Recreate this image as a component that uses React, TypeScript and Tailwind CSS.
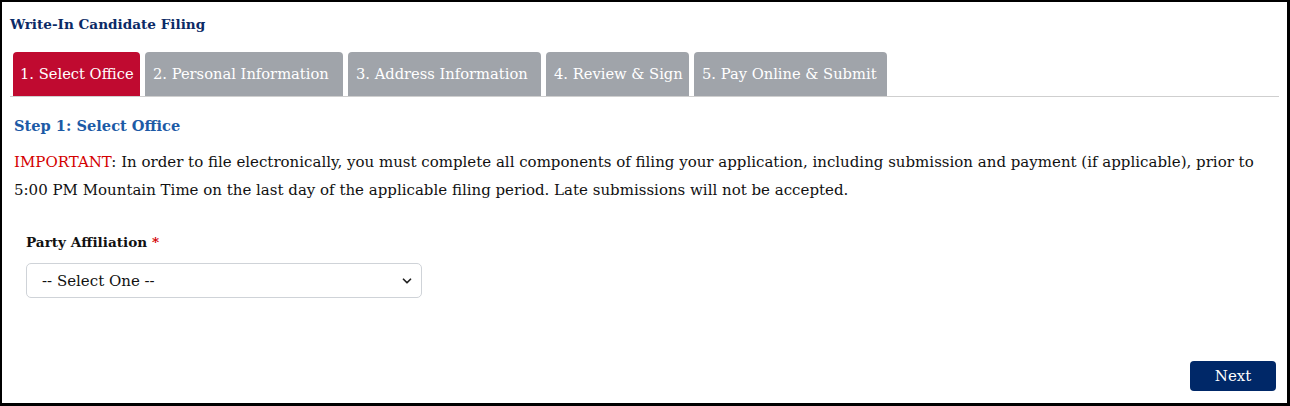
import { ChevronDown } from "lucide-react";

const tabs = [
  { label: "1. Select Office", w: "w-[127px]" },
  { label: "2. Personal Information", w: "w-[198px]" },
  { label: "3. Address Information", w: "w-[193px]" },
  { label: "4. Review & Sign", w: "w-[143px]" },
  { label: "5. Pay Online & Submit", w: "w-[193px]" },
];

const App = () => {
  return (
    <div className="h-[406px] w-[1290px] border-l-2 border-t-2 border-r-[3px] border-b-[3px] border-black bg-white font-['DejaVu_Serif',serif] text-[#111]">
      <div className="flex h-full flex-col pl-[8px] pr-[8px]">
        <h1 className="pt-[12px] text-[13.6px] font-bold text-[#0b2a66]">Write-In Candidate Filing</h1>

        <div className="mt-[18px] flex gap-[5px] border-b border-[#cfcfcf] pl-[3px]">
          {tabs.map((t, i) => (
            <div
              key={t.label}
              className={
                i === 0
                  ? `flex h-[44px] ${t.w} items-center rounded-t-[4px] bg-[#c00a30] pl-[7px] text-[14.7px] text-white`
                  : `flex h-[44px] ${t.w} items-center rounded-t-[4px] bg-[#a0a4aa] pl-[8px] text-[14.7px] text-white`
              }
            >
              {t.label}
            </div>
          ))}
        </div>

        <div className="px-[4px]">
          <h2 className="mt-[18px] text-[14.6px] font-bold text-[#1c5aa6]">Step 1: Select Office</h2>
          <p className="mt-[11px] text-[15px] leading-[28px]">
            <span className="text-[#d40000]">IMPORTANT</span>: In order to file electronically, you must complete all
            components of filing your application, including submission and payment (if applicable), prior to 5:00 PM
            Mountain Time on the last day of the applicable filing period. Late submissions will not be accepted.
          </p>

          <div className="mt-[26px] pl-[12px]">
            <label className="text-[13.6px] font-bold">
              Party Affiliation <span className="text-[#d40000]">*</span>
            </label>
            <div className="mt-[9px] flex h-[35px] w-[396px] items-center justify-between rounded-[5px] border border-[#cfd3d8] pl-[15px] pr-[7px] text-[15px]">
              <span>-- Select One --</span>
              <ChevronDown className="h-[14px] w-[14px] text-[#222]" strokeWidth={3} />
            </div>
          </div>
        </div>

        <div className="mt-auto flex justify-end pb-[12px] pr-[3px]">
          <button className="h-[30px] w-[86px] rounded-[4px] bg-[#002868] text-[15px] text-white">Next</button>
        </div>
      </div>
    </div>
  );
};

export default App;
